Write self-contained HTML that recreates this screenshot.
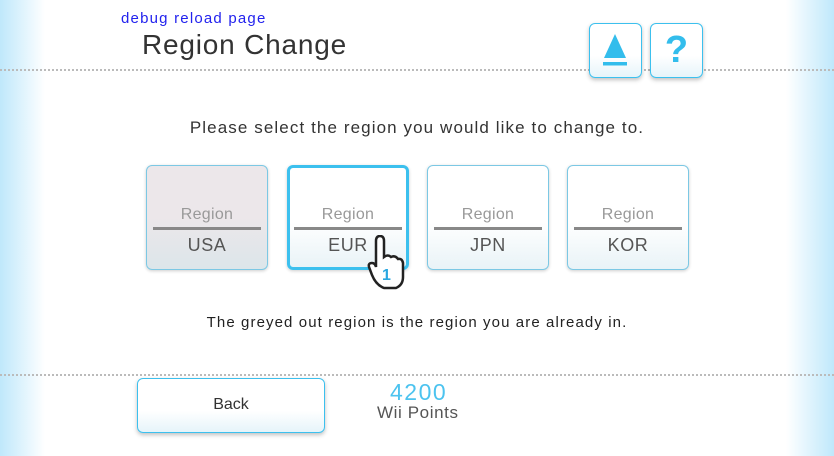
<!DOCTYPE html><html><head><style>
body{margin:0;width:834px;height:456px;overflow:hidden;position:relative;background:#fff;font-family:"Liberation Sans",sans-serif}
.l{position:absolute;left:0;top:0;width:45px;height:456px;background:linear-gradient(90deg,#bfe8fb,#fff)}
.r{position:absolute;right:0;top:0;width:48px;height:456px;background:linear-gradient(270deg,#bfe8fb,#fff)}
.dot{position:absolute;left:0;width:834px;border-top:2px dotted #bbb}
.a{position:absolute;white-space:nowrap}
.btn{position:absolute;border:1.5px solid #3cc0ee;border-radius:6px;background:linear-gradient(#fff 60%,#e6f4fa);box-shadow:0 2px 4px rgba(0,0,0,.25);box-sizing:border-box}
.card{position:absolute;top:165px;width:122px;height:105px;box-sizing:border-box;border:1.5px solid #7cc8e4;border-radius:6px;background:linear-gradient(#fff 55%,#e9f3f7);box-shadow:0 1px 3px rgba(0,0,0,.2)}
.card .t{position:absolute;top:40px;left:0;width:100%;text-align:center;color:#999;font-size:16px;letter-spacing:.3px}
.card .ln{position:absolute;top:61px;left:6px;right:6px;height:3px;background:#888}
.card .b{position:absolute;top:69px;left:0;width:100%;text-align:center;color:#555;font-size:18px;letter-spacing:.6px}
</style></head><body>
<div class="l"></div><div class="r"></div>
<div class="dot" style="top:69px"></div>
<div class="dot" style="top:374px"></div>
<div class="a" style="left:121px;top:10px;color:#2222ee;font-size:15px;letter-spacing:1.2px">debug reload page</div>
<div class="a" style="left:142px;top:29px;color:#333;font-size:28px;letter-spacing:.8px">Region Change</div>
<div class="btn" style="left:589px;top:23px;width:53px;height:55px"><svg width="50" height="52" viewBox="0 0 50 52"><polygon points="25,10 14,34 36,34" fill="#33bdec"/><rect x="13" y="38" width="24" height="3.5" fill="#33bdec"/></svg></div>
<div class="btn" style="left:650px;top:23px;width:53px;height:55px;color:#33bdec;font-size:38px;font-weight:bold;text-align:center;line-height:53px">?</div>
<div class="a" style="left:0;width:834px;top:118px;text-align:center;color:#333;font-size:17px;letter-spacing:1.1px">Please select the region you would like to change to.</div>
<div class="card" style="left:146px;background:linear-gradient(#ece7ea 50%,#dce6ea)"><div class="t">Region</div><div class="ln"></div><div class="b">USA</div></div>
<div class="card" style="left:287px;border:3px solid #3cc0ee"><div class="t" style="top:38px">Region</div><div class="ln" style="top:59px;left:4px;right:4px"></div><div class="b" style="top:67px">EUR</div></div>
<div class="card" style="left:427px"><div class="t">Region</div><div class="ln"></div><div class="b">JPN</div></div>
<div class="card" style="left:567px"><div class="t">Region</div><div class="ln"></div><div class="b">KOR</div></div>
<svg class="a" style="left:366px;top:235px" width="44" height="56" viewBox="0 0 44 56"><path d="M10 6 Q10 1 14 1 Q18 1 18 6 L18 22 Q22 19 25 22 Q29 20 32 24 Q36 23 37 28 L37 42 Q37 50 30 53 L18 53 Q10 50 6 40 L3 32 Q2 28 6 28 Q9 28 10 32 Z" fill="#fff" stroke="#222" stroke-width="2.5"/><text x="16" y="45" font-size="16" font-weight="bold" fill="#2aa7e0" font-family="Liberation Sans">1</text></svg>
<div class="a" style="left:0;width:834px;top:314px;text-align:center;color:#222;font-size:15px;letter-spacing:1.1px">The greyed out region is the region you are already in.</div>
<div class="btn" style="left:137px;top:378px;width:188px;height:55px;text-align:center;line-height:52px;color:#333;font-size:16px">Back</div>
<div class="a" style="left:390px;top:379px;color:#4cc3ef;font-size:23px;letter-spacing:1.5px">4200</div>
<div class="a" style="left:377px;top:403px;color:#555;font-size:17px;letter-spacing:.6px">Wii Points</div>
</body></html>
